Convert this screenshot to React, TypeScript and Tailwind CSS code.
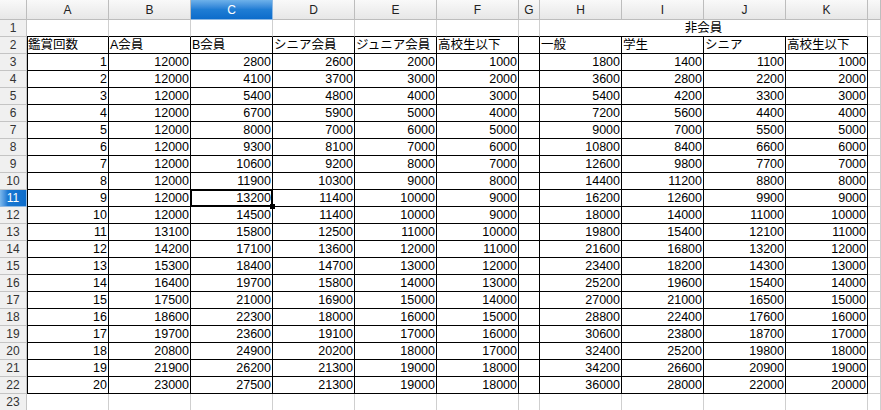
const COLS = ['A', 'B', 'C', 'D', 'E', 'F', 'G', 'H', 'I', 'J', 'K', 'L']

const HEADINGS = ['鑑賞回数', 'A会員', 'B会員', 'シニア会員', 'ジュニア会員', '高校生以下', '', '一般', '学生', 'シニア', '高校生以下']

const D = [2600, 3700, 4800, 5900, 7000, 8100, 9200, 10300, 11400, 11400, 12500, 13600, 14700, 15800, 16900, 18000, 19100, 20200, 21300, 21300]
const E = [2000, 3000, 4000, 5000, 6000, 7000, 8000, 9000, 10000, 10000, 11000, 12000, 13000, 14000, 15000, 16000, 17000, 18000, 19000, 19000]
const F = [1000, 2000, 3000, 4000, 5000, 6000, 7000, 8000, 9000, 9000, 10000, 11000, 12000, 13000, 14000, 15000, 16000, 17000, 18000, 18000]

const DATA: (number | null)[][] = Array.from({ length: 20 }, (_, i) => {
  const n = i + 1
  const b = n <= 10 ? 12000 : 12000 + 1100 * (n - 10)
  return [n, b, 1500 + 1300 * n, D[i], E[i], F[i], null, 1800 * n, 1400 * n, 1100 * n, 1000 * n]
})

const SEL_COL = 2
const SEL_ROW = 11

function ColHeader({ label, active }: { label: string; active: boolean }) {
  return (
    <div
      className={
        'flex items-center justify-center border-r border-b text-[12px] ' +
        (active
          ? 'bg-linear-to-b from-[#6db1ea] via-[#1f7dd4] to-[#0c6ccb] border-[#8fb9e3] text-white'
          : 'bg-linear-to-b from-[#f9f9f9] to-[#e7e7e7] border-[#bdbdbd] text-[#222]')
      }
    >
      {label}
    </div>
  )
}

function RowHeader({ n }: { n: number }) {
  const active = n === SEL_ROW
  return (
    <div
      className={
        'flex items-center justify-center border-r border-b text-[12px] ' +
        (active
          ? 'bg-linear-to-r from-[#7bb8ec] via-[#1a78d2] via-30% to-[#0c6ccb] border-[#8fb9e3] text-white'
          : 'bg-[#f0f0f0] border-[#c4c4c4] text-[#333]')
      }
    >
      {n}
    </div>
  )
}

function Cell({
  value,
  right,
  boxed,
  leftEdge,
  blackBottom,
  selected,
}: {
  value?: string | number | null
  right?: boolean
  boxed?: boolean
  leftEdge?: boolean
  blackBottom?: boolean
  selected?: boolean
}) {
  const rb = boxed ? 'border-r-black' : 'border-r-[#cfcfcf]'
  const bb = boxed || blackBottom ? 'border-b-black' : 'border-b-[#cfcfcf]'
  return (
    <div
      className={
        'relative flex items-center overflow-hidden whitespace-nowrap border-r border-b px-px text-[12.5px] text-black ' +
        rb +
        ' ' +
        bb +
        (right ? ' justify-end' : ' justify-start') +
        (leftEdge ? ' shadow-[inset_1px_0_0_#000]' : '') +
        (selected ? ' overflow-visible z-10' : '')
      }
    >
      {value ?? ''}
      {selected && (
        <div className="absolute -left-px -top-px -right-px -bottom-px border-2 border-black">
          <div className="absolute -right-[4px] -bottom-[4px] h-[5px] w-[5px] bg-black" />
        </div>
      )}
    </div>
  )
}

export default function App() {
  const cells: React.ReactNode[] = []

  // column letters; L is wide, its letter sits off to the right
  cells.push(<div key="corner" className="border-r border-b border-[#bdbdbd] bg-linear-to-b from-[#f9f9f9] to-[#e7e7e7]" />)
  COLS.forEach((c, i) =>
    cells.push(<ColHeader key={'h' + c} label={c === 'L' ? '' : c} active={i === SEL_COL} />),
  )

  // row 1: merged 非会員 over H:K
  cells.push(<RowHeader key="r1" n={1} />)
  for (let c = 0; c < 7; c++) cells.push(<Cell key={'1-' + c} blackBottom />)
  cells.push(
    <div
      key="1-merged"
      className="col-span-4 flex items-center justify-center border-r border-b border-r-[#cfcfcf] border-b-black text-[12.5px] text-black"
    >
      非会員
    </div>,
  )
  cells.push(<Cell key="1-L" />)

  // row 2: headings
  cells.push(<RowHeader key="r2" n={2} />)
  HEADINGS.forEach((h, c) => cells.push(<Cell key={'2-' + c} value={h} boxed leftEdge={c === 0} />))
  cells.push(<Cell key="2-L" />)

  // rows 3..22: values
  DATA.forEach((row, i) => {
    const r = i + 3
    cells.push(<RowHeader key={'r' + r} n={r} />)
    row.forEach((v, c) =>
      cells.push(
        <Cell key={r + '-' + c} value={v} right boxed leftEdge={c === 0} selected={r === SEL_ROW && c === SEL_COL} />,
      ),
    )
    cells.push(<Cell key={r + '-L'} />)
  })

  // row 23: empty
  cells.push(<RowHeader key="r23" n={23} />)
  COLS.forEach((c) => cells.push(<Cell key={'23-' + c} />))

  return (
    <div className="h-[410px] w-[881px] overflow-hidden bg-white font-['Liberation_Sans','Noto_Sans_CJK_JP',sans-serif]">
      <div className="grid grid-cols-[27px_repeat(6,82px)_21px_repeat(4,82px)_1fr] grid-rows-[20px_repeat(23,17px)]">
        {cells}
      </div>
    </div>
  )
}
